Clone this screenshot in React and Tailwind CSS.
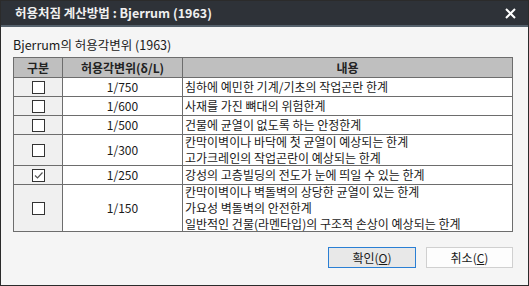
import React from 'react';

const rows = [
  { ratio: '1/750', lines: ['침하에 예민한 기계/기초의 작업곤란 한계'], h: 'h-[19px]' },
  { ratio: '1/600', lines: ['사재를 가진 뼈대의 위험한계'], h: 'h-[19px]' },
  { ratio: '1/500', lines: ['건물에 균열이 없도록 하는 안정한계'], h: 'h-[19px]' },
  { ratio: '1/300', lines: ['칸막이벽이나 바닥에 첫 균열이 예상되는 한계', '고가크레인의 작업곤란이 예상되는 한계'], h: 'h-[31px]' },
  { ratio: '1/250', lines: ['강성의 고층빌딩의 전도가 눈에 띄일 수 있는 한계'], h: 'h-[19px]', checked: true },
  {
    ratio: '1/150',
    lines: ['칸막이벽이나 벽돌벽의 상당한 균열이 있는 한계', '가요성 벽돌벽의 안전한계', '일반적인 건물(라멘타입)의 구조적 손상이 예상되는 한계'],
    h: 'h-[47px]',
  },
];

const CheckBox = ({ checked }) => (
  <div className="w-[13px] h-[13px] border border-[#333333] bg-white flex items-center justify-center">
    {checked && (
      <svg width="11" height="11" viewBox="0 0 11 11">
        <path d="M2 5.5 L4.5 8 L9.5 2.5" fill="none" stroke="#555555" strokeWidth="1.2" />
      </svg>
    )}
  </div>
);

export default function App() {
  return (
    <div
      className="w-[529px] h-[286px] bg-[#f5f5f5] border border-[#2b2b2b] flex flex-col text-[#1a1a1a]"
      style={{ fontFamily: '"Noto Sans CJK KR", "Noto Sans", sans-serif' }}
    >
      <div className="h-[26px] shrink-0 bg-[#2e3238] border-b-2 border-[#55616c] flex items-center justify-between pl-[14px] pr-[12px]">
        <span className="text-[12.5px] font-bold text-[#f0f0f0] leading-none">허용처짐 계산방법 : Bjerrum (1963)</span>
        <svg width="11" height="11" viewBox="0 0 11 11">
          <path d="M1 1 L10 10 M10 1 L1 10" stroke="#ffffff" strokeWidth="2" />
        </svg>
      </div>

      <div className="flex flex-col pl-[12px] pr-[15px] pt-[9px]">
        <div className="text-[12.5px] leading-[18px] mb-[3px]">Bjerrum의 허용각변위 (1963)</div>

        <div className="border border-[#6d6d6d] text-[12px] leading-[16px]">
          <div className="flex h-[19px] bg-[#bfbfbf] font-bold text-[#222222]">
            <div className="w-[49px] flex items-center justify-center border-r border-[#6d6d6d]">구분</div>
            <div className="w-[120px] flex items-center justify-center border-r border-[#6d6d6d]">허용각변위(δ/L)</div>
            <div className="flex-1 flex items-center justify-center">내용</div>
          </div>
          {rows.map((r) => (
            <div key={r.ratio} className={`flex border-t border-[#6d6d6d] ${r.h}`}>
              <div className="w-[49px] flex items-center justify-center bg-[#f0f0f0] border-r border-[#6d6d6d]">
                <CheckBox checked={r.checked} />
              </div>
              <div className="w-[120px] flex items-center justify-center bg-white border-r border-[#6d6d6d]">
                {r.ratio}
              </div>
              <div className="flex-1 flex flex-col justify-center bg-white pl-[2px]">
                {r.lines.map((l) => (
                  <div key={l}>{l}</div>
                ))}
              </div>
            </div>
          ))}
        </div>

        <div className="flex justify-end gap-[10px] mt-[15px] text-[12px]">
          <button className="w-[88px] h-[21px] bg-[#e8e8e8] border border-[#2a7fd4] flex items-center justify-center">
            확인(<span className="underline">O</span>)
          </button>
          <button className="w-[87px] h-[21px] bg-[#fdfdfd] border border-[#d0d0d0] flex items-center justify-center">
            취소(<span className="underline">C</span>)
          </button>
        </div>
      </div>
    </div>
  );
}
